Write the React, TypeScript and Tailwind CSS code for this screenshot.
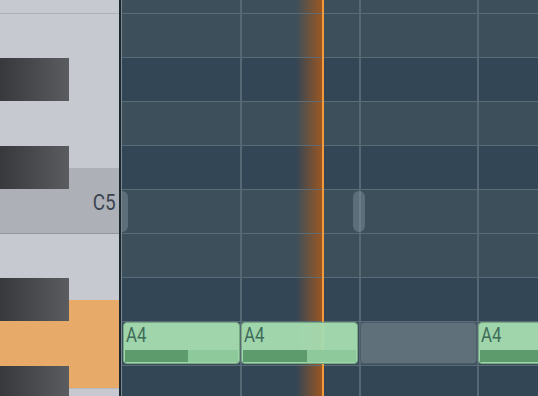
import React from "react";

const rows = [
  { h: "h-[13px]", dark: false, top: false },
  { h: "h-[44px]", dark: false, top: true },
  { h: "h-[44px]", dark: true, top: true },
  { h: "h-[44px]", dark: false, top: true },
  { h: "h-[44px]", dark: true, top: true },
  { h: "h-[44px]", dark: false, top: true },
  { h: "h-[44px]", dark: false, top: true },
  { h: "h-[44px]", dark: true, top: true },
  { h: "h-[44px]", dark: false, top: true },
  { h: "h-[44px]", dark: true, top: true },
];

// white keys from top to bottom
const whiteKeys = [
  { h: "h-[13px]", cls: "bg-[#c6c9d0]", label: "" },
  { h: "h-[66px]", cls: "bg-[#c6c9d0] border-t border-[#adb1b8]", label: "" },
  { h: "h-[89px]", cls: "bg-[#c6c9d0]", label: "" },
  { h: "h-[65px]", cls: "bg-[#adb0b6]", label: "C5" },
  { h: "h-[67px]", cls: "bg-[#c6c9d0] border-t border-[#94989e]", label: "" },
  { h: "h-[88px]", cls: "bg-[#e8aa68]", label: "" },
  { h: "h-[20px]", cls: "bg-[#c6c9d0] border-t border-[#b4b8be]", label: "" },
];

const blackKeyTops = ["top-[58px]", "top-[146px]", "top-[278px]", "top-[366px]"];

const notes = [
  { left: "left-[1px]", fill: "w-[63px]" },
  { left: "left-[119px]", fill: "w-[64px]" },
  { left: "left-[356px]", fill: "w-[200px]" },
];

function Note({ left, fill }: { left: string; fill: string }) {
  return (
    <div
      className={`absolute top-[322px] ${left} h-[42px] w-[117px] rounded-[4px] border border-[#76a883] bg-[#a5dcb1]/95 overflow-hidden`}
    >
      <div className="absolute left-[2px] top-[1px] text-[20px] leading-[22px] text-[#3d6b58] origin-left scale-x-[0.84] font-['Roboto',sans-serif]">
        A4
      </div>
      <div className="absolute left-[1px] right-[1px] top-[27px] h-[12px] bg-[#8ec99c]">
        <div className={`h-full ${fill} bg-[#5d9b6c]`} />
      </div>
    </div>
  );
}

export default function App() {
  return (
    <div className="flex w-[538px] h-[396px] overflow-hidden bg-[#334656]">
      {/* piano keys */}
      <div className="relative w-[119px] shrink-0 flex flex-col">
        {whiteKeys.map((k, i) => (
          <div key={i} className={`${k.h} shrink-0 ${k.cls} flex items-center justify-end pr-[3px]`}>
            {k.label && (
              <span className="text-[22px] leading-none text-[#3b4350] origin-right scale-x-[0.86] font-['Roboto',sans-serif] mt-[4px]">
                {k.label}
              </span>
            )}
          </div>
        ))}
        {blackKeyTops.map((t) => (
          <div
            key={t}
            className={`absolute left-0 ${t} w-[69px] h-[43px] bg-gradient-to-r from-[#38393c] to-[#5b5c60]`}
          />
        ))}
      </div>

      {/* divider */}
      <div className="w-[2px] shrink-0 bg-[#1c272d]" />
      <div className="w-[1px] shrink-0 bg-[#7b8b96]" />

      {/* grid */}
      <div className="relative flex-1 overflow-hidden">
        <div className="flex flex-col">
          {rows.map((r, i) => (
            <div key={i} className={`${r.h} shrink-0 ${r.dark ? "bg-[#334656]" : "bg-[#3c4f5b]"}`} />
          ))}
        </div>

        {/* playhead trail */}
        <div className="absolute top-0 bottom-0 left-[174px] w-[26px] bg-gradient-to-r from-transparent to-[#a5581c]/90" />

        {/* key lines */}
        <div className="absolute inset-0 flex flex-col">
          {rows.map((r, i) => (
            <div key={i} className={`${r.h} shrink-0 ${r.top ? "border-t border-[#5d6f7b]/90" : ""}`} />
          ))}
        </div>

        {/* beat lines */}
        <div className="absolute inset-0 flex">
          <div className="w-[120px] shrink-0 border-r-2 border-[#566874]" />
          <div className="w-[119px] shrink-0 border-r-2 border-[#566874]" />
          <div className="w-[118px] shrink-0 border-r-2 border-[#566874]" />
        </div>

        {/* note handles in C5 row */}
        <div className="absolute left-[-6px] top-[191px] w-[12px] h-[41px] rounded-[6px] bg-[#8a9ea8]/40" />
        <div className="absolute left-[231px] top-[191px] w-[12px] h-[41px] rounded-[6px] bg-[#8a9ea8]/40" />

        {/* playhead */}
        <div className="absolute top-0 bottom-0 left-[200px] w-[2px] bg-[#f59a38]" />

        {/* ghost note */}
        <div className="absolute top-[322px] left-[238px] h-[42px] w-[117px] rounded-[4px] border border-[#4d5e68] bg-[#5f707b]" />

        {notes.map((n) => (
          <Note key={n.left} left={n.left} fill={n.fill} />
        ))}
      </div>
    </div>
  );
}
